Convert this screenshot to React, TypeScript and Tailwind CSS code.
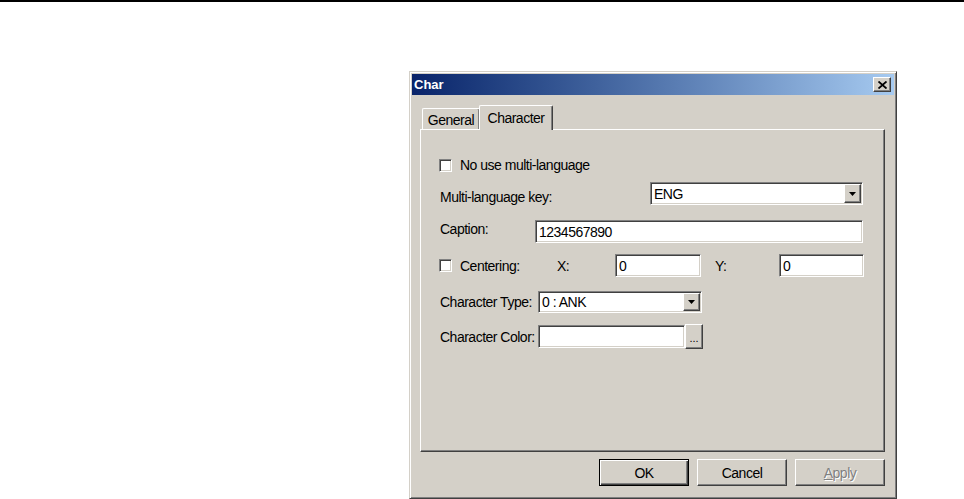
import React from "react";

const sunken =
  "border border-t-[#808080] border-l-[#808080] border-b-white border-r-white shadow-[inset_1px_1px_0_#404040,inset_-1px_-1px_0_#d4d0c8] bg-white";
const raised =
  "border border-t-white border-l-white border-b-[#404040] border-r-[#404040] shadow-[inset_-1px_-1px_0_#808080] bg-[#d4d0c8]";

function CheckBox() {
  return <span className={`${sunken} block h-[13px] w-[13px] shrink-0`} />;
}

function DropArrow() {
  return (
    <span className={`${raised} flex h-full w-[17px] shrink-0 items-center justify-center`}>
      <svg width="7" height="4" viewBox="0 0 7 4">
        <path d="M0 0h7L3.5 4z" fill="#000" />
      </svg>
    </span>
  );
}

function Combo({ value, width }: { value: string; width: string }) {
  return (
    <div className={`${sunken} ${width} flex h-full items-stretch p-px`}>
      <span className="flex flex-1 items-center pl-[2px]">{value}</span>
      <DropArrow />
    </div>
  );
}

function PushButton({ label, isDefault, disabled }: { label: React.ReactNode; isDefault?: boolean; disabled?: boolean }) {
  if (isDefault) {
    return (
      <button className="flex h-[27px] w-[90px] items-center justify-center border border-black bg-[#d4d0c8] shadow-[inset_1px_1px_0_#fff,inset_-1px_-1px_0_#404040,inset_-2px_-2px_0_#808080]">
        {label}
      </button>
    );
  }
  return (
    <button
      className={`${raised} flex h-[27px] w-[90px] items-center justify-center ${
        disabled ? "text-[#808080] [text-shadow:1px_1px_0_#fff]" : ""
      }`}
    >
      {label}
    </button>
  );
}

export default function App() {
  return (
    <div className="h-[499px] w-full overflow-hidden bg-white font-['Liberation_Sans',Arial,sans-serif] text-[14px] leading-none tracking-[-0.5px] text-black">
      <div className="h-[2px] w-full bg-black" />

      {/* dialog window */}
      <div className="ml-[409px] mt-[69px] flex h-[428px] w-[488px] flex-col border border-t-[#d4d0c8] border-l-[#d4d0c8] border-b-[#404040] border-r-[#404040] bg-[#d4d0c8] p-[2px] shadow-[inset_1px_1px_0_#fff,inset_-1px_-1px_0_#808080]">
        {/* title bar */}
        <div className="flex h-[21px] items-center justify-between bg-gradient-to-r from-[#0a246a] to-[#a6caf0] pl-[2px] pr-[3px]">
          <span className="font-bold tracking-normal text-white text-[13px]">Char</span>
          <span className={`${raised} flex h-[15px] w-[18px] items-center justify-center`}>
            <svg width="9" height="8" viewBox="0 0 9 8">
              <path d="M0.5 0.5l8 7M8.5 0.5l-8 7" stroke="#000" strokeWidth="1.8" />
            </svg>
          </span>
        </div>

        <div className="flex flex-col pl-[8px]">
          {/* tabs */}
          <div className="mt-[10px] flex h-[24px] items-end pl-[2px]">
            <div className="flex h-[21px] w-[58px] items-center justify-center rounded-t-[2px] border-l border-t border-l-white border-t-white border-r border-r-[#404040] shadow-[inset_-1px_0_0_#808080] pt-[1px]">
              General
            </div>
            <div className="relative z-10 -mb-px -ml-px flex h-[25px] w-[74px] items-start justify-center rounded-t-[2px] border-l border-t border-r border-l-white border-t-white border-r-[#404040] bg-[#d4d0c8] pt-[5px] shadow-[inset_-1px_0_0_#808080]">
              Character
            </div>
          </div>

          {/* tab page */}
          <div className="flex h-[323px] w-[465px] flex-col border border-t-white border-l-white border-b-[#404040] border-r-[#404040] pl-[18px] pt-[28px] shadow-[inset_-1px_-1px_0_#808080]">
            <div className="flex h-[14px] items-center gap-[8px]">
              <CheckBox />
              <span>No use multi-language</span>
            </div>

            <div className="mt-[10px] flex h-[23px] items-center">
              <span className="w-[211px] pl-px pt-[6px]">Multi-language key:</span>
              <Combo value="ENG" width="w-[213px]" />
            </div>

            <div className="mt-[15px] flex h-[23px] items-center">
              <span className="w-[96px] pb-[5px] pl-px">Caption:</span>
              <div className={`${sunken} flex h-full w-[328px] items-center pl-[3px]`}>1234567890</div>
            </div>

            <div className="mt-[11px] flex h-[23px] items-center">
              <div className="flex w-[118px] items-center gap-[8px]">
                <CheckBox />
                <span>Centering:</span>
              </div>
              <span className="w-[58px]">X:</span>
              <div className={`${sunken} flex h-full w-[86px] items-center pl-[3px]`}>0</div>
              <span className="ml-[14px] w-[64px]">Y:</span>
              <div className={`${sunken} flex h-full w-[85px] items-center pl-[3px]`}>0</div>
            </div>

            <div className="mt-[14px] flex h-[22px] items-center">
              <span className="w-[99px] pl-px">Character Type:</span>
              <Combo value="0 : ANK" width="w-[164px]" />
            </div>

            <div className="mt-[12px] flex h-[23px] items-center">
              <span className="w-[99px] pl-px">Character Color:</span>
              <div className={`${sunken} h-full w-[147px]`} />
              <span className={`${raised} flex h-[25px] w-[18px] items-end justify-center pb-[4px] text-[11px] tracking-normal`}>...</span>
            </div>
          </div>

          {/* buttons */}
          <div className="mt-[7px] flex w-[465px] justify-end gap-[8px]">
            <PushButton label="OK" isDefault />
            <PushButton label="Cancel" />
            <PushButton
              label={
                <span>
                  <span className="underline">A</span>pply
                </span>
              }
              disabled
            />
          </div>
        </div>
      </div>
    </div>
  );
}
